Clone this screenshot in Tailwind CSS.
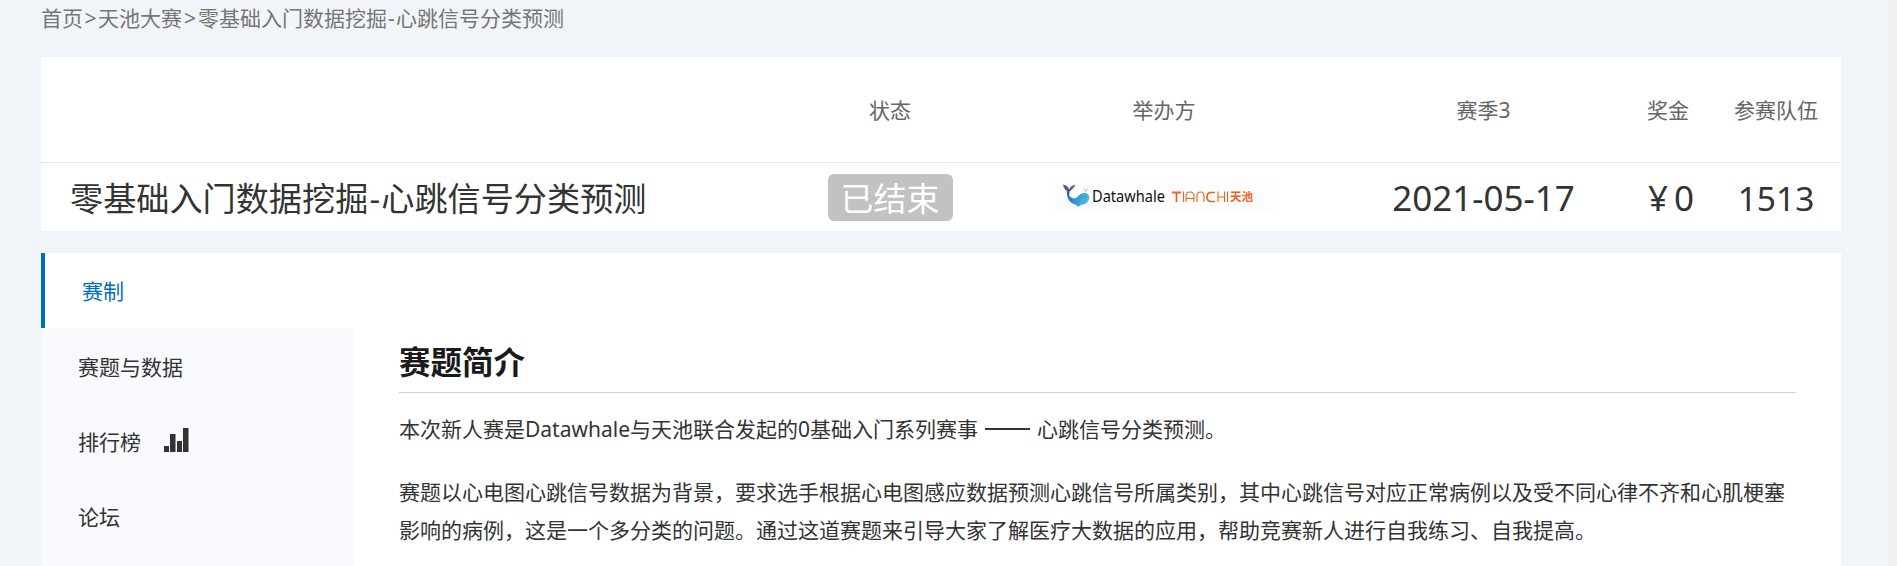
<!DOCTYPE html>
<html lang="zh-CN">
<head>
<meta charset="utf-8">
<title>零基础入门数据挖掘-心跳信号分类预测</title>
<script src="https://cdn.jsdelivr.net/npm/@tailwindcss/browser@4"></script>
</head>
<body class="flex h-[566px] overflow-hidden bg-[#f1f5fa] font-['Noto_Sans','Noto_Sans_CJK_SC',sans-serif] text-[21px] text-[#333]">
<div class="flex h-full flex-1 flex-col pl-[41px] pr-[47px]">
  <nav class="h-[57px] whitespace-nowrap leading-[36px] text-[#757575]">首页<span class="inline-block w-[15px] text-center">&gt;</span>天池大赛<span class="inline-block w-4 text-center">&gt;</span>零基础入门数据挖掘<span class="inline-block w-[9px] text-center">-</span>心跳信号分类预测</nav>

  <section class="h-[174px] shrink-0 bg-white">
    <div class="grid h-[106px] grid-cols-[753px_192px_356px_283px_86px_130px] items-center border-b border-[#dfe6ec] text-center leading-8 text-[#666]">
      <div></div><div>状态</div><div>举办方</div><div>赛季3</div><div>奖金</div><div>参赛队伍</div>
    </div>
    <div class="grid h-[68px] grid-cols-[753px_192px_356px_283px_86px_130px] items-center whitespace-nowrap text-center text-[35px] leading-[48px]">
      <h1 class="pl-[29px] pt-[3px] text-left text-[33.150px]">零基础入门数据挖掘<span class="inline-block w-[13px] text-center">-</span>心跳信号分类预测</h1>
      <div class="flex justify-center"><span class="h-[47px] w-[125px] rounded-md bg-[#c2c2c2] text-[33px] leading-[49px] text-white">已结束</span></div>
      <div class="flex justify-center pb-[6px]">
        <svg width="224" height="33" viewBox="0 0 224 33">
          <defs>
            <linearGradient id="body" x1="0" y1="0" x2="1" y2="0.3"><stop offset="0" stop-color="#2464ad"/><stop offset="0.5" stop-color="#3495d4"/><stop offset="1" stop-color="#4ab9e6"/></linearGradient>
            <linearGradient id="tail" x1="0" y1="0" x2="1" y2="0"><stop offset="0" stop-color="#a84f67"/><stop offset="0.5" stop-color="#31529a"/><stop offset="1" stop-color="#b06680"/></linearGradient>
          </defs>
          <rect width="224" height="33" fill="#fdfdfd"/>
          <path d="M11 6.500 C14 7 16 8.500 17.200 11.500 C18 9 20 7 23.500 6.500 C22.500 9.500 20.500 11 18 13 C17 15 17 17 17.200 19 L15.200 17 C14.500 15.500 15.200 14 15.200 13 C12.500 12 11.500 9 11 6.500Z" fill="url(#tail)"/>
          <path d="M15.300 13 C15.800 15.500 17 19.500 22 20.500 C25.500 20.500 26.500 15.500 32 15 C36 14.800 37.800 17.500 37 21 C36 25 32.500 26.800 28.500 27 L26 29 L24.500 27 C18 25.500 14 20.500 15.300 13Z" fill="url(#body)"/>
          <circle cx="33.800" cy="18.800" r=".6" fill="#14558c"/>
          <path d="M31.500 10.500 L33.500 12.500 L36 11 M33.500 12.500 V14" fill="none" stroke="#8bcbe7" stroke-width="1"/>
          <text x="40" y="24" font-family="'Noto Sans'" font-size="15.500" fill="#111" textLength="73" lengthAdjust="spacingAndGlyphs">Datawhale</text>
          <g fill="none" stroke="#ea6420" stroke-width="1.100">
            <path d="M120 14.500 H129 M124.500 14.500 V24" stroke-width="1.800"/>
            <path d="M131.500 13.500 V24 M134 24 V18 Q134 14 138 14 Q142 14 142 18 V24 M134 20.500 H142 M145 24 V18 Q145 14 148.500 14 Q152 14 152 18 V24"/>
            <path d="M163 14.500 H159 Q155 14.500 155 19 Q155 23.500 159 23.500 H163" stroke-width="1.700"/>
            <path d="M166 13.500 V24 M166 19 H172.500 M172.500 13.500 V24 M175.500 13.500 V24"/>
          </g>
          <text x="178" y="23.300" font-family="'Noto Sans CJK SC'" font-weight="700" font-size="11.500" fill="#ea6420">天池</text>
        </svg>
      </div>
      <div class="pt-[2px]">2021-05-17</div>
      <div class="flex justify-center gap-[6px] pl-[6px] pt-[2px]"><span>¥</span><span>0</span></div>
      <div class="pt-[2px] text-[33.500px]">1513</div>
    </div>
  </section>

  <section class="mt-[22px] flex min-h-0 flex-1 bg-white">
    <aside class="w-[313px] shrink-0 bg-[#f9fafe] leading-[78px]">
      <a class="block h-[75px] border-l-4 border-[#006ebb] bg-white pl-[37px] leading-[77px] text-[#006ebb]">赛制</a>
      <a class="block h-[75px] pl-[37px]">赛题与数据</a>
      <a class="flex h-[75px] gap-[23px] pl-[37px]">排行榜<svg class="mt-[25px]" width="26" height="24" viewBox="0 0 26 24" fill="#333"><path d="M0 18h5v6H0zM6 6h5.500v18H6zM13 13h5v11h-5zM19 0h5.500v24H19z"/></svg></a>
      <a class="block h-[75px] pl-[37px]">论坛</a>
    </aside>
    <main class="flex-1 pl-[45px] pr-[45px] pt-[82px]">
      <h2 class="h-[58px] border-b border-[#d0d0d0] text-[31.500px] font-bold leading-[54px] text-[#1a1a1a]">赛题简介</h2>
      <p class="mt-[17px] whitespace-nowrap leading-[38px]">本次新人赛是Datawhale与天池联合发起的0基础入门系列赛事<span class="mx-[7px] inline-block h-[2px] w-[45px] bg-[#333] align-[7px]" role="separator"></span>心跳信号分类预测。</p>
      <p class="mt-[25px] leading-[38px] whitespace-nowrap">赛题以心电图心跳信号数据为背景，要求选手根据心电图感应数据预测心跳信号所属类别，其中心跳信号对应正常病例以及受不同心律不齐和心肌梗塞<br>影响的病例，这是一个多分类的问题。通过这道赛题来引导大家了解医疗大数据的应用，帮助竞赛新人进行自我练习、自我提高。</p>
    </main>
  </section>
</div>
<div class="h-full w-[9px] bg-[#f0f0f0]"></div>
</body>
</html>
